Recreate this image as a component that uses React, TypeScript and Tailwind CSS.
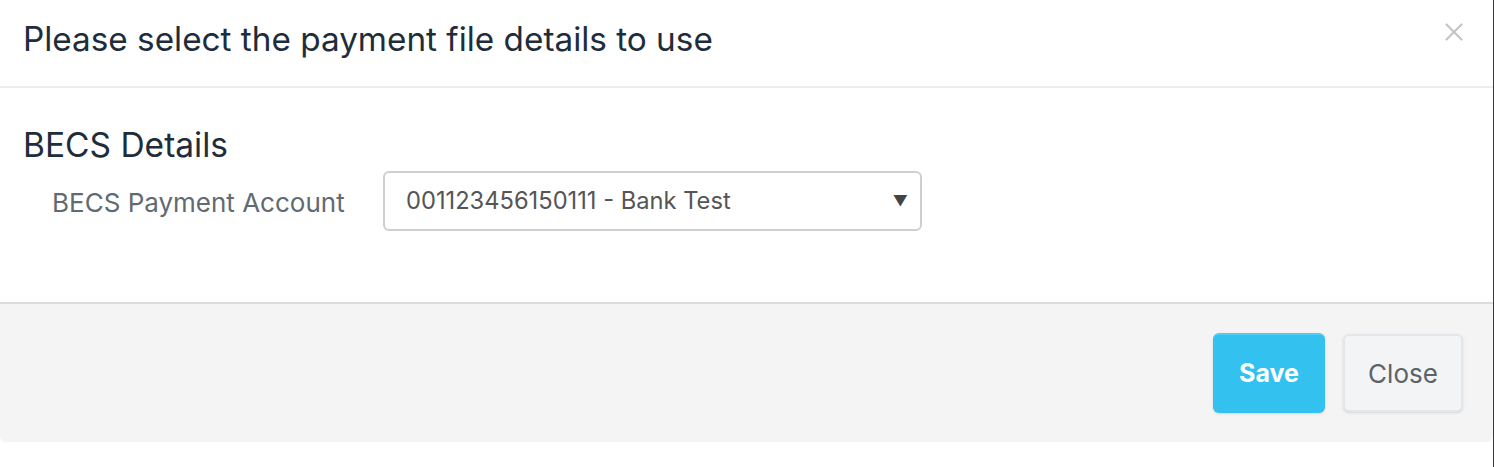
import { X } from "lucide-react";

const font = { fontFamily: "Inter, 'Open Sans', sans-serif" };

const App = () => (
  <div className="flex h-[467px] w-full bg-white" style={font}>
    <div className="flex-1">
      <div className="rounded-b-[6px] bg-white">
        {/* Header */}
        <div className="flex h-[88px] items-start justify-between border-b-2 border-[#ededed] pl-[23px] pr-[24px] pt-[19px]">
          <h1 className="text-[33.3px] leading-[40px] text-[#1e2d3b]">
            Please select the payment file details to use
          </h1>
          <button className="-mt-[2px] text-[#c6c6c6]">
            <X size={30} strokeWidth={1.8} />
          </button>
        </div>

        {/* Body */}
        <div className="px-[23px] pb-[71px] pt-[37px]">
          <h2 className="text-[33.5px] leading-[40px] text-[#1e2d3b]">BECS Details</h2>
          <div className="mt-[6px] flex items-center pl-[29px]">
            <label className="w-[331px] pt-[3px] text-[26px] text-[#5f6a72]">BECS Payment Account</label>
            <div className="flex h-[60px] w-[539px] items-center justify-between rounded-[6px] border-2 border-[#cfcfcf] pl-[21px] pr-[12px] text-[23.7px] text-[#555]">
              <span>001123456150111 - Bank Test</span>
              <span className="text-[15px] text-[#444]">▼</span>
            </div>
          </div>
        </div>

        {/* Footer */}
        <div className="flex h-[140px] items-center justify-end gap-[18px] rounded-b-[6px] border-t-2 border-[#dcdcdc] bg-[#f4f4f4] pr-[30px]">
          <button className="h-[80px] w-[112px] rounded-[6px] border-t-2 border-[#4fcdf3] bg-[#33c1ef] text-[25px] font-bold text-white shadow-sm">
            Save
          </button>
          <button className="h-[78px] w-[120px] rounded-[6px] border-2 border-[#e3e6ea] bg-[#f3f4f6] text-[26px] text-[#5b6369] shadow-sm">
            Close
          </button>
        </div>
      </div>
    </div>
    <div className="w-px bg-[#3a3a3a]" />
  </div>
);

export default App;
